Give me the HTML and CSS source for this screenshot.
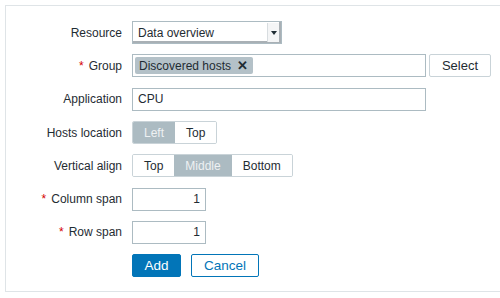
FILE: index.html
```html
<html>

<head>
  <link rel="stylesheet" href="styles.css">
</head>

<body>
  <div class="form-frame">
    <div class="form-grid">

      <div class="form-label">Resource</div>
      <div class="form-field">
        <div class="select-box">
          <span class="select-value">Data overview</span>
          <span class="select-arrow"></span>
        </div>
      </div>

      <div class="form-label"><span class="required">*</span>Group</div>
      <div class="form-field">
        <div class="multiselect">
          <span class="tag">Discovered hosts <span class="tag-remove">&#x2715;</span></span>
        </div>
        <button class="btn-grey">Select</button>
      </div>

      <div class="form-label">Application</div>
      <div class="form-field">
        <div class="text-input wide">CPU</div>
      </div>

      <div class="form-label">Hosts location</div>
      <div class="form-field">
        <div class="radio-list">
          <span class="radio-item active">Left</span>
          <span class="radio-item">Top</span>
        </div>
      </div>

      <div class="form-label">Vertical align</div>
      <div class="form-field">
        <div class="radio-list">
          <span class="radio-item">Top</span>
          <span class="radio-item active">Middle</span>
          <span class="radio-item">Bottom</span>
        </div>
      </div>

      <div class="form-label"><span class="required">*</span>Column span</div>
      <div class="form-field">
        <div class="text-input number">1</div>
      </div>

      <div class="form-label"><span class="required">*</span>Row span</div>
      <div class="form-field">
        <div class="text-input number">1</div>
      </div>

      <div class="form-label"></div>
      <div class="form-field buttons">
        <button class="btn-primary">Add</button>
        <button class="btn-alt">Cancel</button>
      </div>

    </div>
  </div>
</body>

</html>
```

FILE: styles.css
```css
* {
  margin: 0;
  padding: 0;
  box-sizing: border-box;
}

body {
  font-family: "Liberation Sans", Arial, sans-serif;
  font-size: 12px;
  color: #1f2c33;
  background: #fff;
  padding: 5px 0 0 5px;
}

.form-frame {
  width: 520px;
  height: 287px;
  border: 1px solid #dfe4e7;
  border-right: none;
  padding: 15px 0 0 0;
}

.form-grid {
  display: grid;
  grid-template-columns: 116px auto;
  column-gap: 10px;
  row-gap: 10px;
  grid-auto-rows: 23.3px;
}

.form-label {
  display: flex;
  align-items: center;
  justify-content: flex-end;
  white-space: nowrap;
}

.required {
  color: #d40000;
  margin-right: 5px;
}

.form-field {
  display: flex;
  align-items: center;
  gap: 3px;
}

.select-box {
  width: 150px;
  height: 23px;
  border: 1px solid #acbbc2;
  display: flex;
  align-items: center;
  justify-content: space-between;
  padding-left: 5px;
  box-shadow: inset -2px -2px 0 #a9b0b5;
}

.select-arrow {
  width: 12px;
  height: 19px;
  margin-right: 2px;
  border-left: 1px solid #d8dde0;
  background: #f4f5f6;
  position: relative;
}

.select-arrow::after {
  content: "";
  position: absolute;
  left: 3px;
  top: 8px;
  border-left: 3px solid transparent;
  border-right: 3px solid transparent;
  border-top: 4px solid #1f2c33;
}

.multiselect {
  width: 294px;
  height: 23px;
  border: 1px solid #acbbc2;
  display: flex;
  align-items: center;
  padding-left: 2px;
}

.tag {
  display: inline-flex;
  align-items: center;
  height: 17px;
  background: #b4c1c8;
  border-radius: 2px;
  padding: 0 5px 0 4px;
  color: #1f2c33;
}

.tag-remove {
  font-weight: bold;
  font-size: 13px;
  margin-left: 6px;
  color: #1f2c33;
}

.btn-grey {
  font-family: inherit;
  font-size: 13px;
  width: 62px;
  height: 23px;
  background: #fff;
  border: 1px solid #c9d3d8;
  border-radius: 2px;
  color: #1f2c33;
}

.text-input {
  height: 23px;
  border: 1px solid #acbbc2;
  display: flex;
  align-items: center;
  padding: 0 5px;
}

.text-input.wide {
  width: 294px;
}

.text-input.number {
  width: 74px;
  justify-content: flex-end;
}

.radio-list {
  display: flex;
  height: 23px;
  border: 1px solid #c9d3d8;
  border-radius: 2px;
  overflow: hidden;
}

.radio-item {
  display: flex;
  align-items: center;
  padding: 0 11px;
  background: #fff;
}

.radio-item.active {
  background: #acbbc2;
  color: #eef1f3;
}

.buttons {
  gap: 10px;
}

.btn-primary {
  font-family: inherit;
  font-size: 13.5px;
  width: 49px;
  height: 23px;
  background: #0275b8;
  border: 1px solid #0275b8;
  border-radius: 2px;
  color: #fff;
}

.btn-alt {
  font-family: inherit;
  font-size: 13.5px;
  width: 68px;
  height: 23px;
  background: #fff;
  border: 1px solid #0275b8;
  border-radius: 2px;
  color: #0275b8;
}
```
